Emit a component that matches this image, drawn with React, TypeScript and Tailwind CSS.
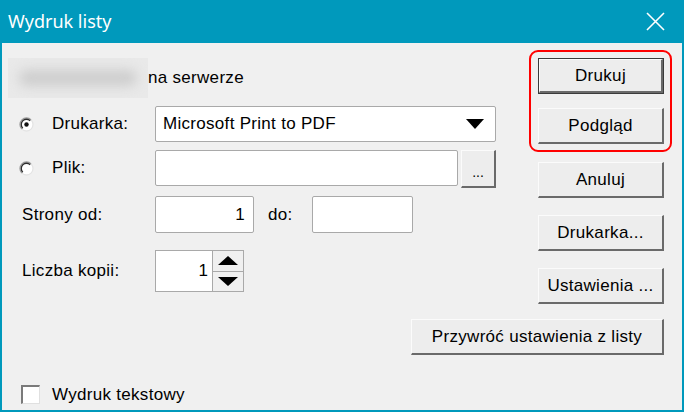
import React from "react";

const font = { fontFamily: '"Liberation Sans", Arial, sans-serif' };

type BtnProps = {
  label: string;
  w?: string;
  def?: boolean;
};

const Button = ({ label, w = "w-[126px]", def = false }: BtnProps) => {
  return (
    <div className={`${w} h-[36px] ${def ? "border border-[#3c3c3c]" : ""} shrink-0`}>
      <div className="w-full h-full flex items-center justify-center bg-[#ededed] border-t border-l border-t-[#fbfbfb] border-l-[#fbfbfb] border-r-2 border-b-2 border-r-[#6a6a6a] border-b-[#6a6a6a] text-[17px] tracking-[0.3px] text-black">
        {label}
      </div>
    </div>
  );
};

const Radio = ({ checked }: { checked?: boolean }) => (
  <svg width="15" height="15" viewBox="0 0 15 15" className="shrink-0">
    <circle cx="7.5" cy="7.5" r="6.5" fill="#ffffff" />
    <path d="M2.9 12.1 A6.5 6.5 0 0 1 12.1 2.9" fill="none" stroke="#9a9a9a" strokeWidth="1.3" />
    <path d="M3.8 11.2 A5.2 5.2 0 0 1 11.2 3.8" fill="none" stroke="#2e2e2e" strokeWidth="1.3" />
    <path d="M12.1 2.9 A6.5 6.5 0 0 1 2.9 12.1" fill="none" stroke="#e4e4e4" strokeWidth="1.3" />
    {checked && <circle cx="7.5" cy="7.5" r="2.2" fill="#111" />}
  </svg>
);

const Field = ({ w, h = "h-[37px]", children }: { w: string; h?: string; children?: React.ReactNode }) => (
  <div className={`${w} ${h} shrink-0 bg-white border border-[#a9a9a9] rounded-[2px] flex items-center text-[17px] tracking-[0.3px]`}>
    {children}
  </div>
);

export default function App() {
  return (
    <div className="w-[684px] h-[412px] flex flex-col bg-[#0099bc] overflow-hidden text-black" style={font}>
      <div className="h-[43px] shrink-0 flex items-center justify-between pl-[8px] pr-[19px]">
        <span className="text-white text-[18px]" style={{ fontFamily: '"Noto Sans", "Open Sans", sans-serif' }}>
          Wydruk listy
        </span>
        <svg width="19" height="19" viewBox="0 0 19 19">
          <path d="M1 1 L18 18 M18 1 L1 18" stroke="#ffffff" strokeWidth="1.6" />
        </svg>
      </div>

      <div className="flex-1 flex flex-col bg-[#f0f0f0] mx-[2px] mb-[2px] pt-[7px]">
        <div className="flex justify-between pl-[6px] pr-[10px]">
          {/* left part */}
          <div className="flex flex-col pt-[8px] w-[488px]">
            <div className="h-[40px] flex items-center">
              <div className="w-[140px] h-[40px] bg-[#e9e9e9] flex items-center justify-center overflow-hidden">
                <div className="w-[118px] h-[16px] bg-[#cdcdcd] blur-[6px] rounded-full" />
              </div>
              <span className="text-[17px] tracking-[0.3px]">na serwerze</span>
            </div>

            <div className="h-[36px] mt-[8px] flex items-center">
              <div className="w-[147px] flex items-center pl-[11px] gap-[18px]">
                <Radio checked />
                <span className="text-[17px] tracking-[0.3px]">Drukarka:</span>
              </div>
              <Field w="w-[341px]" h="h-[36px]">
                <span className="pl-[7px] flex-1">Microsoft Print to PDF</span>
                <svg width="18" height="10" viewBox="0 0 18 10" className="mr-[11px]">
                  <path d="M0 0 H18 L9 10 Z" fill="#000" />
                </svg>
              </Field>
            </div>

            <div className="h-[38px] mt-[8px] flex items-start">
              <div className="w-[147px] h-[36px] flex items-center pl-[11px] gap-[18px]">
                <Radio />
                <span className="text-[17px] tracking-[0.3px]">Plik:</span>
              </div>
              <Field w="w-[303px]" h="h-[36px]" />
              <div className="ml-[3px] w-[35px] h-[38px] bg-[#ededed] border-t border-l border-t-[#fbfbfb] border-l-[#fbfbfb] border-r-2 border-b-2 border-r-[#6a6a6a] border-b-[#6a6a6a] flex items-end justify-center pb-[7px] text-[14px] leading-none">
                ...
              </div>
            </div>

            <div className="h-[37px] mt-[8px] flex items-center">
              <div className="w-[147px] pl-[14px] text-[17px] tracking-[0.3px]">Strony od:</div>
              <Field w="w-[99px]">
                <span className="flex-1 text-right pr-[8px]">1</span>
              </Field>
              <div className="w-[58px] pl-[14px] text-[17px] tracking-[0.3px]">do:</div>
              <Field w="w-[101px]" />
            </div>

            <div className="h-[42px] mt-[17px] flex items-center">
              <div className="w-[147px] pl-[14px] text-[17px] tracking-[0.3px]">Liczba kopii:</div>
              <div className="w-[89px] h-[42px] bg-white border border-[#a9a9a9] flex">
                <div className="flex-1 flex items-center justify-end pr-[4px] text-[17px]">1</div>
                <div className="w-[31px] flex flex-col border-l border-[#a9a9a9]">
                  <div className="flex-1 bg-[#f0f0f0] border-b border-[#a9a9a9] flex items-center justify-center">
                    <svg width="20" height="9" viewBox="0 0 20 9">
                      <path d="M0 9 H20 L10 0 Z" fill="#000" />
                    </svg>
                  </div>
                  <div className="flex-1 bg-[#f0f0f0] flex items-center justify-center">
                    <svg width="20" height="9" viewBox="0 0 20 9">
                      <path d="M0 0 H20 L10 9 Z" fill="#000" />
                    </svg>
                  </div>
                </div>
              </div>
            </div>
          </div>

          {/* right buttons */}
          <div className="w-[143px] flex flex-col">
            <div className="h-[102px] border-2 border-[#ff0000] rounded-[9px] pt-[6px] pl-[7px] flex flex-col gap-[14px]">
              <Button label="Drukuj" def />
              <Button label="Podgląd" />
            </div>
            <div className="ml-[9px] mt-[10px]">
              <Button label="Anuluj" />
            </div>
            <div className="ml-[9px] mt-[17px]">
              <Button label="Drukarka..." />
            </div>
            <div className="ml-[9px] mt-[17px]">
              <Button label="Ustawienia ..." />
            </div>
          </div>
        </div>

        <div className="flex justify-end pr-[18px] mt-[15px]">
          <Button label="Przywróć ustawienia z listy" w="w-[253px]" />
        </div>

        <div className="flex items-center mt-[27px] pl-[19px] gap-[12px]">
          <div className="w-[19px] h-[19px] bg-white border-t-2 border-l-2 border-t-[#7a7a7a] border-l-[#7a7a7a] border-r border-b border-r-[#e0e0e0] border-b-[#e0e0e0]" />
          <span className="text-[17px] tracking-[0.3px]">Wydruk tekstowy</span>
        </div>
      </div>
    </div>
  );
}
